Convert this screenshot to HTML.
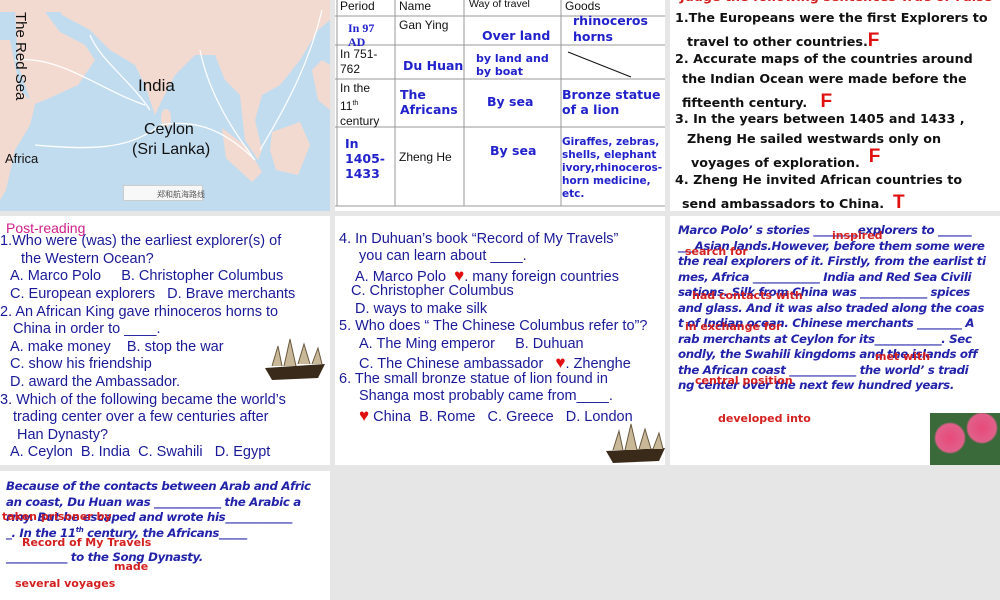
<!DOCTYPE html>
<html><head><meta charset="utf-8"><style>
*{margin:0;padding:0;box-sizing:border-box}
body{width:1000px;height:600px;background:#e6e6e6;position:relative;overflow:hidden;font-family:"Liberation Sans",sans-serif}
.p{position:absolute;background:#fff;overflow:hidden}
.t{position:absolute;white-space:nowrap}
.q{font-size:14.5px;color:#1a1a99}
.bl{font-family:"DejaVu Sans",sans-serif;font-weight:bold;font-style:italic;color:#2222aa;font-size:11.8px;letter-spacing:-0.35px}
.rd{font-family:"DejaVu Sans",sans-serif;font-weight:bold;color:#d42020;font-size:11px}
.tf{font-family:"DejaVu Sans",sans-serif;font-weight:bold;color:#111;font-size:12.7px}
.F{color:#e01010;font-family:"Liberation Sans",sans-serif;font-weight:bold;font-size:19px}
.tb{font-size:12px;color:#111}
.tbb{font-family:"DejaVu Sans",sans-serif;font-weight:bold;color:#2222cc;font-size:12.5px}
.heart{color:#e01010;font-size:17px}
</style></head><body>

<!-- map -->
<div class="p" style="left:0;top:0;width:330px;height:211px;background:#c2dcef">
<svg width="330" height="211" style="position:absolute;left:0;top:0">
<g fill="#f3dad0">
<rect x="0" y="0" width="330" height="12"/>
<path d="M15,10 L45,12 L60,32 L85,45 L95,60 L78,85 L45,100 L32,105 L18,65Z"/>
<path d="M58,0 L62,15 L90,30 L110,50 L135,65 L145,85 L155,115 L162,100 L175,75 L195,55 L215,55 L225,80 L240,95 L245,140 L258,160 L262,150 L255,120 L262,95 L280,85 L300,60 L318,30 L330,20 L330,0Z"/>
<path d="M0,40 L10,40 L20,90 L35,105 L30,125 L15,150 L6,190 L0,200Z"/>
<ellipse cx="166" cy="118" rx="5" ry="9"/>
<path d="M272,132 L300,122 L310,145 L298,175 L276,170 L270,150Z"/>
<path d="M222,128 L248,148 L262,172 L252,182 L226,158Z"/>
<path d="M312,70 L322,60 L330,65 L330,110 L318,100Z"/>
</g>
<path d="M15,60 C60,55 100,90 145,105 M35,145 C90,150 130,150 160,125 C190,120 220,125 255,160 M200,50 C210,100 240,140 255,160 M260,150 C290,100 310,60 322,10 M150,110 C130,80 100,60 90,35" stroke="#fff" stroke-width="1.2" fill="none"/>
</svg>
<div class="t" style="left:12px;top:12px;font-size:15px;writing-mode:vertical-rl;color:#111">The Red Sea</div>
<div class="t" style="left:138px;top:76px;font-size:17px;color:#111">India</div>
<div class="t" style="left:144px;top:121px;font-size:16px;color:#111">Ceylon</div>
<div class="t" style="left:132px;top:141px;font-size:16px;color:#111">(Sri Lanka)</div>
<div class="t" style="left:5px;top:151px;font-size:13px;color:#111">Africa</div>
<div class="t" style="left:123px;top:185px;width:80px;height:16px;background:#f8f8f8;border:1px solid #ccc;font-size:8px;color:#555;padding:3px 0 0 33px">郑和航海路线</div>
</div>

<!-- table -->
<div class="p" style="left:335px;top:0;width:330px;height:211px">
<svg width="330" height="211" style="position:absolute;left:0;top:0">
<g stroke="#999" stroke-width="1"><line x1="0" y1="16" x2="330" y2="16"/><line x1="0" y1="45" x2="330" y2="45"/><line x1="0" y1="79" x2="330" y2="79"/><line x1="0" y1="127" x2="330" y2="127"/><line x1="0" y1="206" x2="330" y2="206"/>
<line x1="60" y1="0" x2="60" y2="206"/><line x1="129" y1="0" x2="129" y2="206"/><line x1="226" y1="0" x2="226" y2="206"/><line x1="2" y1="0" x2="2" y2="206"/></g>
<line x1="233" y1="52" x2="296" y2="77" stroke="#111" stroke-width="1"/>
</svg>
<div class="t tb" style="left:5px;top:-1px">Period</div>
<div class="t tb" style="left:64px;top:-1px">Name</div>
<div class="t tb" style="left:134px;top:-2px;font-size:10.5px">Way of travel</div>
<div class="t tb" style="left:230px;top:-1px">Goods</div>
<div class="t" style="left:13px;top:21px;font-family:'Liberation Serif',serif;font-weight:bold;color:#2222cc;font-size:12px;line-height:14px">In 97<br>AD</div>
<div class="t tb" style="left:64px;top:18px">Gan Ying</div>
<div class="t tbb" style="left:147px;top:28px">Over land</div>
<div class="t tbb" style="left:238px;top:13px;line-height:16px">rhinoceros<br>horns</div>
<div class="t tb" style="left:5px;top:47px;line-height:15px">In 751-<br>762</div>
<div class="t tbb" style="left:68px;top:58px">Du Huan</div>
<div class="t tbb" style="left:141px;top:52px;font-size:11px;line-height:13px">by land and<br>by boat</div>
<div class="t tb" style="left:5px;top:81px;line-height:15px">In the<br>11<sup style="font-size:7px">th</sup><br>century</div>
<div class="t tbb" style="left:65px;top:87px;line-height:15px">The<br>Africans</div>
<div class="t tbb" style="left:152px;top:94px">By sea</div>
<div class="t tbb" style="left:227px;top:87px;line-height:15px">Bronze statue<br>of a lion</div>
<div class="t tbb" style="left:10px;top:136px;line-height:15px">In<br>1405-<br>1433</div>
<div class="t tb" style="left:64px;top:150px">Zheng He</div>
<div class="t tbb" style="left:155px;top:143px">By sea</div>
<div class="t tbb" style="left:227px;top:136px;font-size:10.5px;line-height:13px">Giraffes, zebras,<br>shells, elephant<br>ivory,rhinoceros-<br>horn medicine,<br>etc.</div>
</div>

<!-- true/false -->
<div class="p" style="left:670px;top:0;width:330px;height:211px">
<div class="t tf" style="left:10px;top:-11px;color:#d42020">Judge the following sentences True or False</div>
<div class="t tf" style="left:5px;top:10px">1.The Europeans were the first Explorers to</div>
<div class="t tf" style="left:17px;top:30px">travel to other countries.<span class="F">F</span></div>
<div class="t tf" style="left:5px;top:51px">2. Accurate maps of the countries around</div>
<div class="t tf" style="left:12px;top:71px">the Indian Ocean were made before the</div>
<div class="t tf" style="left:12px;top:91px">fifteenth century. &nbsp;&nbsp;<span class="F">F</span></div>
<div class="t tf" style="left:5px;top:111px">3. In the years between 1405 and 1433 ,</div>
<div class="t tf" style="left:17px;top:131px">Zheng He sailed westwards only on</div>
<div class="t tf" style="left:21px;top:151px">voyages of exploration. &nbsp;<span class="F" style="position:relative;top:-5px">F</span></div>
<div class="t tf" style="left:5px;top:172px">4. Zheng He invited African countries to</div>
<div class="t tf" style="left:12px;top:192px">send ambassadors to China. &nbsp;<span class="F">T</span></div>
</div>

<!-- middle left -->
<div class="p" style="left:0;top:216px;width:330px;height:249px">
<div class="t" style="left:6px;top:4px;color:#d0208a;font-size:14px">Post-reading</div>
<div class="t q" style="left:0;top:17px">1.Who were (was) the earliest explorer(s) of</div>
<div class="t q" style="left:21px;top:35px">the Western Ocean?</div>
<div class="t q" style="left:10px;top:52px">A. Marco Polo &nbsp;&nbsp;&nbsp;&nbsp;B. Christopher Columbus</div>
<div class="t q" style="left:10px;top:70px">C. European explorers &nbsp;&nbsp;D. Brave merchants</div>
<div class="t q" style="left:0;top:88px">2. An African King gave rhinoceros horns to</div>
<div class="t q" style="left:13px;top:105px">China in order to ____.</div>
<div class="t q" style="left:10px;top:123px">A. make money &nbsp;&nbsp;&nbsp;B. stop the war</div>
<div class="t q" style="left:10px;top:140px">C. show his friendship</div>
<div class="t q" style="left:10px;top:158px">D. award the Ambassador.</div>
<div class="t q" style="left:0;top:176px">3. Which of the following became the world’s</div>
<div class="t q" style="left:13px;top:193px">trading center over a few centuries after</div>
<div class="t q" style="left:17px;top:211px">Han Dynasty?</div>
<div class="t q" style="left:10px;top:228px">A. Ceylon &nbsp;B. India &nbsp;C. Swahili &nbsp;&nbsp;D. Egypt</div>
<svg width="70" height="50" style="position:absolute;left:260px;top:118px"><path d="M5,34 L65,30 L58,44 L12,46Z" fill="#3a2a1a"/><path d="M12,32 L18,12 L22,32 M24,32 L30,5 L36,32 M38,30 L44,10 L50,30 M52,30 L58,14 L62,30" fill="#c8b898" stroke="#6a5a40"/></svg>
</div>

<!-- middle center -->
<div class="p" style="left:335px;top:216px;width:330px;height:249px">
<div class="t q" style="left:4px;top:15px">4. In Duhuan’s book “Record of My Travels”</div>
<div class="t q" style="left:24px;top:32px">you can learn about ____.</div>
<div class="t q" style="left:20px;top:50px">A. Marco Polo &nbsp;<span class="heart">♥</span>. many foreign countries</div>
<div class="t q" style="left:16px;top:67px">C. Christopher Columbus</div>
<div class="t q" style="left:20px;top:85px">D. ways to make silk</div>
<div class="t q" style="left:4px;top:102px">5. Who does “ The Chinese Columbus refer to”?</div>
<div class="t q" style="left:24px;top:120px">A. The Ming emperor &nbsp;&nbsp;&nbsp;&nbsp;B. Duhuan</div>
<div class="t q" style="left:24px;top:137px">C. The Chinese ambassador &nbsp;&nbsp;<span class="heart">♥</span>. Zhenghe</div>
<div class="t q" style="left:4px;top:155px">6. The small bronze statue of lion found in</div>
<div class="t q" style="left:24px;top:172px">Shanga most probably came from____.</div>
<div class="t q" style="left:24px;top:190px"><span class="heart">♥</span> China &nbsp;B. Rome &nbsp;&nbsp;C. Greece &nbsp;&nbsp;D. London</div>
<svg width="65" height="45" style="position:absolute;left:268px;top:205px"><path d="M3,30 L62,27 L56,40 L10,42Z" fill="#3a2a1a"/><path d="M10,29 L16,10 L20,29 M22,29 L28,3 L34,29 M36,28 L42,8 L48,28 M50,28 L56,12 L60,28" fill="#c8b898" stroke="#6a5a40"/></svg>
</div>

<!-- middle right -->
<div class="p" style="left:670px;top:216px;width:330px;height:249px">
<div class="t bl" style="left:8px;top:7px">Marco Polo’ s stories ________explorers to ______</div>
<div class="t bl" style="left:8px;top:23px">___Asian lands.However, before them some were</div>
<div class="t bl" style="left:8px;top:38px">the real explorers of it. Firstly, from the earlist ti</div>
<div class="t bl" style="left:8px;top:54px">mes, Africa ____________ India and Red Sea Civili</div>
<div class="t bl" style="left:8px;top:69px">sations. Silk from China was ____________ spices</div>
<div class="t bl" style="left:8px;top:85px">and glass. And it was also traded along the coas</div>
<div class="t bl" style="left:8px;top:100px">t of Indian ocean. Chinese merchants ________ A</div>
<div class="t bl" style="left:8px;top:116px">rab merchants at Ceylon for its____________. Sec</div>
<div class="t bl" style="left:8px;top:131px">ondly, the Swahili kingdoms and the islands off</div>
<div class="t bl" style="left:8px;top:147px">the African coast ____________ the world’ s tradi</div>
<div class="t bl" style="left:8px;top:162px">ng center over the next few hundred years.</div>
<div class="t rd" style="left:162px;top:13px">inspired</div>
<div class="t rd" style="left:15px;top:29px">search for</div>
<div class="t rd" style="left:22px;top:73px">had contacts with</div>
<div class="t rd" style="left:15px;top:104px">in exchange for</div>
<div class="t rd" style="left:205px;top:134px">met with</div>
<div class="t rd" style="left:25px;top:158px">central position</div>
<div class="t rd" style="left:48px;top:196px">developed into</div>
<div style="position:absolute;left:260px;top:197px;width:70px;height:52px;background:radial-gradient(circle at 20px 25px,#e84a7a 0,#e0608a 14px,transparent 16px),radial-gradient(circle at 52px 15px,#e84a7a 0,#e0608a 14px,transparent 16px),#3a6a3a"></div>
</div>

<!-- bottom left -->
<div class="p" style="left:0;top:471px;width:330px;height:129px">
<div class="t bl" style="left:6px;top:8px">Because of the contacts between Arab and Afric</div>
<div class="t bl" style="left:6px;top:24px">an coast, Du Huan was ____________ the Arabic a</div>
<div class="t bl" style="left:6px;top:39px">rmy. But he escaped and wrote his____________</div>
<div class="t bl" style="left:6px;top:55px">_. In the 11<sup style="font-size:7px">th</sup> century, the Africans_____</div>
<div class="t bl" style="left:6px;top:79px">___________ to the Song Dynasty.</div>
<div class="t rd" style="left:2px;top:39px">taken prisoner by</div>
<div class="t rd" style="left:22px;top:65px">Record of My Travels</div>
<div class="t rd" style="left:114px;top:89px">made</div>
<div class="t rd" style="left:15px;top:106px">several voyages</div>
</div>
</body></html>
